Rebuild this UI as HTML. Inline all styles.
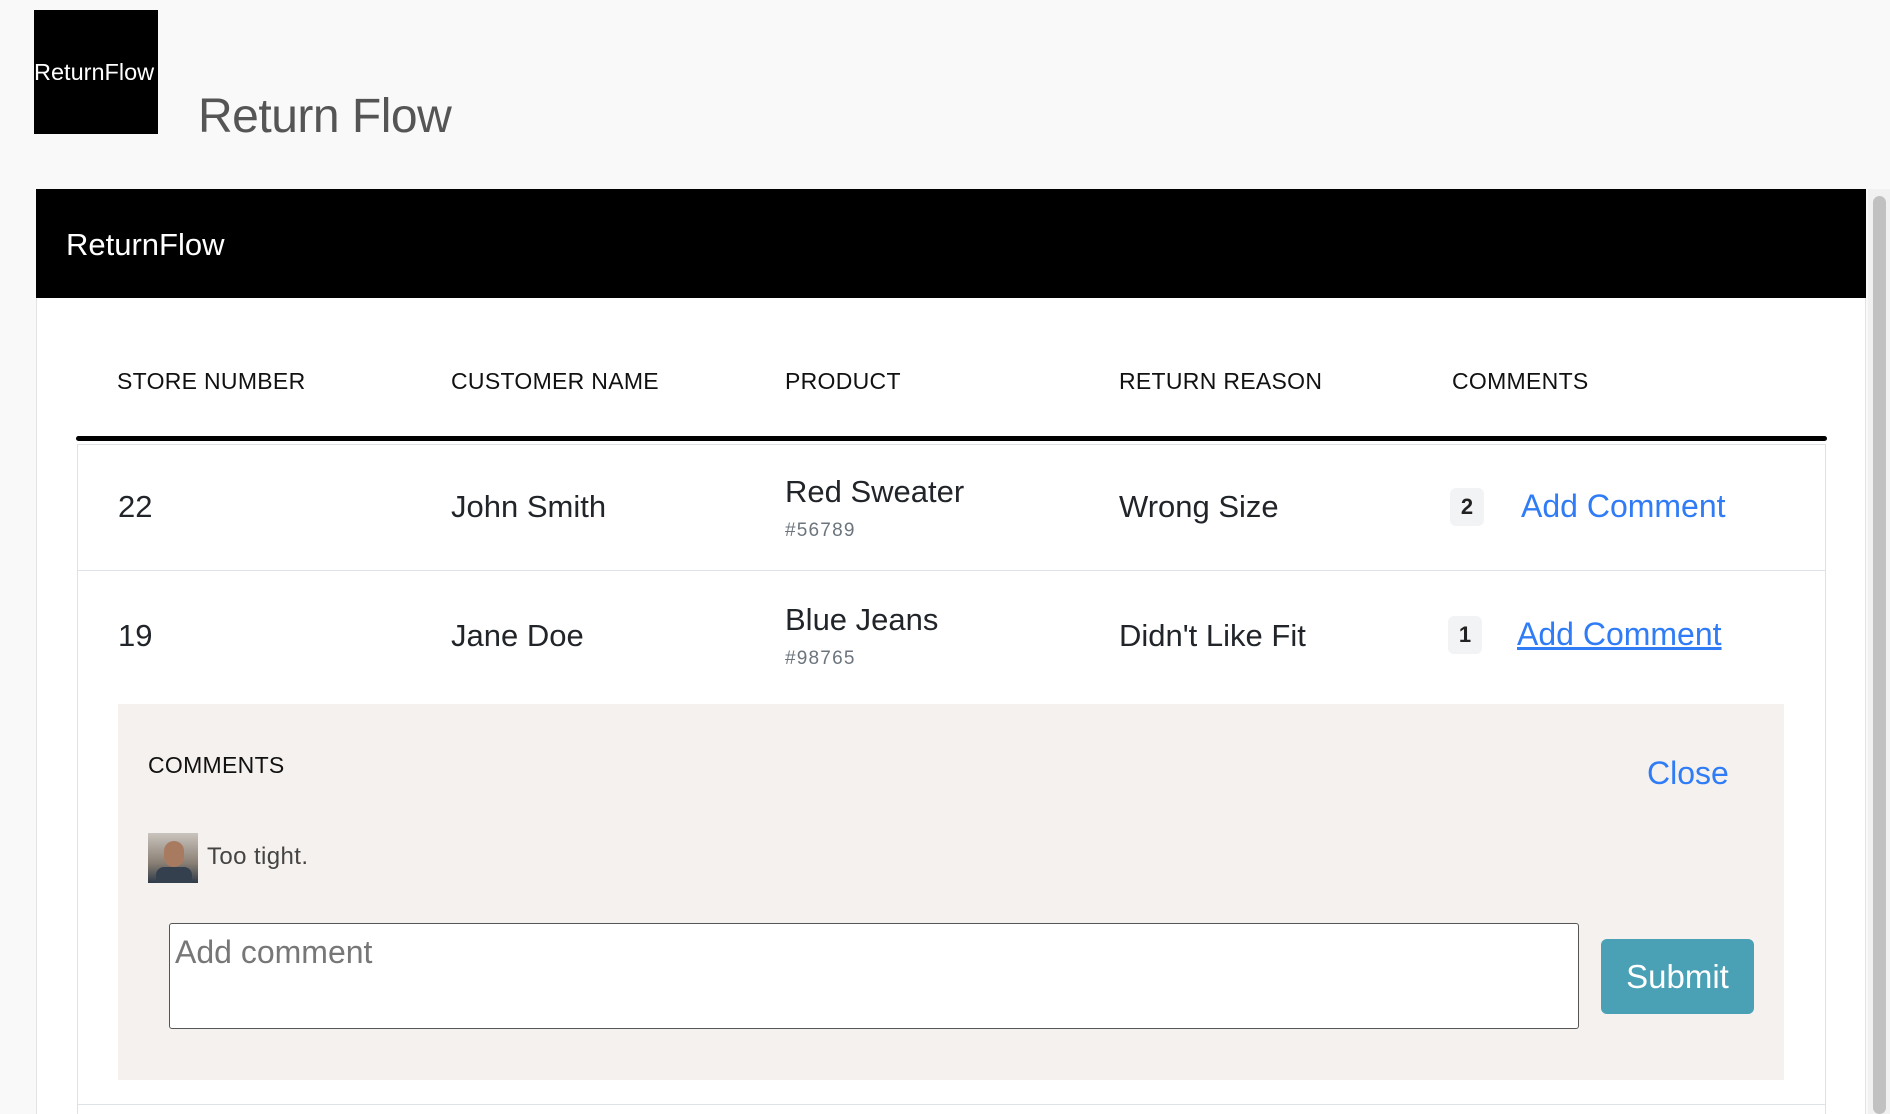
<!DOCTYPE html>
<html style="height:1114px;overflow:hidden"><head><style>
*{margin:0;padding:0;box-sizing:border-box}
body{width:1890px;height:1114px;overflow:hidden;background:#f9f9f9;font-family:"Liberation Sans",sans-serif;position:relative;color:#212529}
.a{position:absolute;white-space:nowrap}
.h{font-size:23px;color:#111;top:368px;letter-spacing:0.3px}
.c{font-size:31px;color:#212529}
.s{font-size:19px;color:#6c757d;letter-spacing:1.2px}
.l{font-size:32px;color:#2f7cf6}
.b{background:#f2f3f5;border-radius:6px;font-size:22px;font-weight:bold;width:34px;height:38px;text-align:center;line-height:38px;color:#222}
</style></head><body>
<div class="a" style="left:34px;top:10px;width:124px;height:124px;background:#000"></div>
<div class="a" style="left:34px;top:59px;color:#fff;font-size:23.5px">ReturnFlow</div>
<div class="a" style="left:198px;top:89px;font-size:48px;color:#555;letter-spacing:-0.5px">Return Flow</div>
<div class="a" style="left:36px;top:189px;width:1830px;height:925px;background:#fff;border:1px solid #e3e3e3;border-bottom:none"></div>
<div class="a" style="left:36px;top:189px;width:1830px;height:109px;background:#000"></div>
<div class="a" style="left:66px;top:227px;color:#fff;font-size:31px">ReturnFlow</div>
<div class="a" style="left:1868px;top:189px;width:22px;height:925px;background:#f1f1f1"></div>
<div class="a" style="left:1873px;top:196px;width:13px;height:918px;background:#c1c1c1;border-radius:7px"></div>
<div class="a h" style="left:117px">STORE NUMBER</div>
<div class="a h" style="left:451px">CUSTOMER NAME</div>
<div class="a h" style="left:785px">PRODUCT</div>
<div class="a h" style="left:1119px">RETURN REASON</div>
<div class="a h" style="left:1452px">COMMENTS</div>
<div class="a" style="left:77px;top:444px;width:1749px;height:670px;border:1px solid #dee2e6;border-bottom:none"></div>
<div class="a" style="left:76px;top:436px;width:1751px;height:5px;background:#000;border-radius:3px"></div>
<div class="a" style="left:77px;top:570px;width:1749px;height:1px;background:#dee2e6"></div>
<div class="a" style="left:77px;top:1104px;width:1749px;height:1px;background:#dee2e6"></div>
<div class="a c" style="left:118px;top:489px">22</div>
<div class="a c" style="left:451px;top:489px">John Smith</div>
<div class="a c" style="left:785px;top:474px">Red Sweater</div>
<div class="a s" style="left:785px;top:520px">#56789</div>
<div class="a c" style="left:1119px;top:489px">Wrong Size</div>
<div class="a b" style="left:1450px;top:488px">2</div>
<div class="a l" style="left:1521px;top:488px">Add Comment</div>
<div class="a c" style="left:118px;top:618px">19</div>
<div class="a c" style="left:451px;top:618px">Jane Doe</div>
<div class="a c" style="left:785px;top:602px">Blue Jeans</div>
<div class="a s" style="left:785px;top:648px">#98765</div>
<div class="a c" style="left:1119px;top:618px">Didn't Like Fit</div>
<div class="a b" style="left:1448px;top:616px">1</div>
<div class="a l" style="left:1517px;top:616px;text-decoration:underline">Add Comment</div>
<div class="a" style="left:118px;top:704px;width:1666px;height:376px;background:#f5f1ee"></div>
<div class="a" style="left:148px;top:752px;font-size:23px;color:#111;letter-spacing:0.3px">COMMENTS</div>
<div class="a l" style="left:1647px;top:755px">Close</div>
<div class="a" style="left:148px;top:833px;width:50px;height:50px;background:linear-gradient(#c9c4bd,#8a7f74 60%,#2d3a48)"><div style="position:absolute;left:16px;top:8px;width:20px;height:26px;border-radius:10px;background:#a87a60"></div><div style="position:absolute;left:8px;top:34px;width:36px;height:16px;background:#34404e;border-radius:8px 8px 0 0"></div></div>
<div class="a" style="left:207px;top:843px;font-size:24px;color:#444;letter-spacing:0.4px">Too tight.</div>
<div class="a" style="left:169px;top:923px;width:1410px;height:106px;background:#fff;border:1px solid #555;border-radius:3px"></div>
<div class="a" style="left:175px;top:934px;font-size:32px;color:#777">Add comment</div>
<div class="a" style="left:1601px;top:939px;width:153px;height:75px;background:#4aa0b5;border-radius:6px;color:#fff;font-size:33px;text-align:center;line-height:75px">Submit</div>
</body></html>
